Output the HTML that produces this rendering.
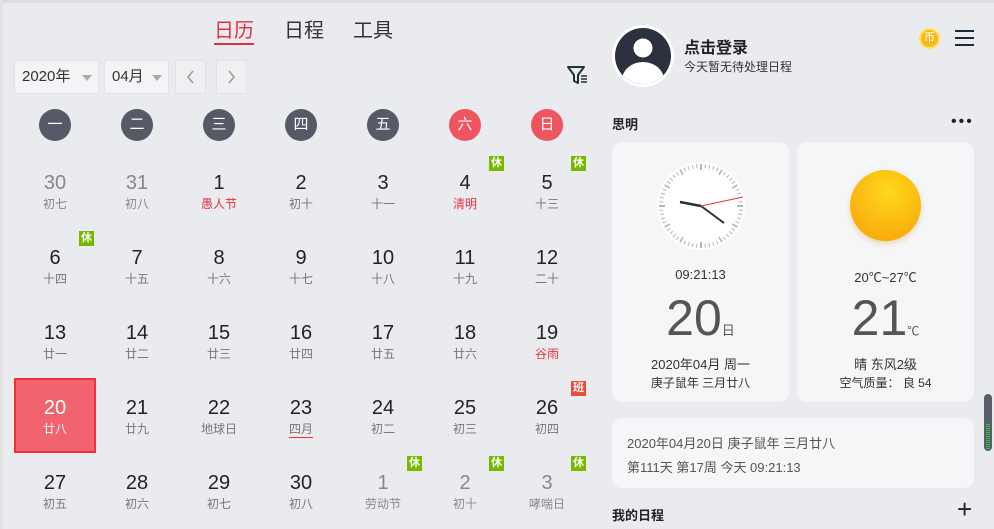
<!DOCTYPE html>
<html><head><meta charset="utf-8">
<style>
*{margin:0;padding:0;box-sizing:border-box}
body{width:994px;height:529px;overflow:hidden;background:#eaebee;font-family:"Liberation Sans","Noto Sans CJK SC",sans-serif;position:relative;color:#222}
.a{position:absolute}
.tab{position:absolute;top:14px;font-size:20px;color:#333}
.sel{position:absolute;top:60px;height:34px;background:#f3f4f6;border:1px solid #e2e3e6;font-size:15px;color:#333;line-height:32px;padding-left:7px}
.sel i{position:absolute;top:14px;width:0;height:0;border-left:5px solid transparent;border-right:5px solid transparent;border-top:6px solid #aaa}
.nb{position:absolute;top:60px;width:31px;height:34px;background:#eef0f2;border:1px solid #e2e3e6}
.wd{position:absolute;top:109px;width:32px;height:32px;border-radius:50%;background:#555a66;color:#fff;text-align:center;line-height:32px;font-size:15px}
.c{position:absolute;width:82px;height:75px;text-align:center}
.c b{display:block;font-weight:normal;font-size:20px;color:#222;margin-top:19px;line-height:22px}
.c s{display:block;text-decoration:none;font-size:12px;color:#777;line-height:16px;margin-top:2px}
.c.g b{color:#888}.c.g s{color:#888}
.r s{color:#e4313f!important}
.bx{position:absolute;top:3px;right:2px;width:15px;height:15px;background:#79b800;color:#fff;font-size:11px;line-height:15px;text-align:center;font-weight:bold}
.bx.ban{background:#e94c3c}
.card{position:absolute;background:#f5f6f8;border-radius:10px}
</style></head><body>
<div class="a" style="left:0;top:0;width:994px;height:3px;background:#dcdcdc"></div>
<div class="a" style="left:0;top:0;width:3px;height:529px;background:#e2e2e2"></div>

<div class="tab" style="left:214px;color:#e4313f">日历</div>
<div class="a" style="left:214px;top:43px;width:40px;height:2px;background:#e4313f"></div>
<div class="tab" style="left:284px">日程</div>
<div class="tab" style="left:353px">工具</div>

<div class="sel" style="left:14px;width:85px">2020年<i style="left:67px"></i></div>
<div class="sel" style="left:104px;width:65px">04月<i style="left:47px"></i></div>
<div class="nb" style="left:175px"><svg width="29" height="32" viewBox="0 0 29 32"><path d="M17 10 L12 16 L17 22" fill="none" stroke="#999" stroke-width="1.5"/></svg></div>
<div class="nb" style="left:216px"><svg width="29" height="32" viewBox="0 0 29 32"><path d="M12 10 L17 16 L12 22" fill="none" stroke="#999" stroke-width="1.5"/></svg></div>
<svg class="a" style="left:566px;top:64px" width="26" height="22" viewBox="0 0 26 22"><path d="M2 3 H18 L12 11 V19 L8 17 V11 Z" fill="none" stroke="#233" stroke-width="2" stroke-linejoin="round"/><path d="M15 12h6M15 15h6M15 18h6" stroke="#233" stroke-width="1.5"/></svg>

<div class="wd" style="left:39px">一</div>
<div class="wd" style="left:121px">二</div>
<div class="wd" style="left:203px">三</div>
<div class="wd" style="left:285px">四</div>
<div class="wd" style="left:367px">五</div>
<div class="wd" style="left:449px;background:#ef5461">六</div>
<div class="wd" style="left:531px;background:#ef5461">日</div>

<div class="c g" style="left:14px;top:153px"><b>30</b><s>初七</s></div>
<div class="c g" style="left:96px;top:153px"><b>31</b><s>初八</s></div>
<div class="c r" style="left:178px;top:153px"><b>1</b><s>愚人节</s></div>
<div class="c" style="left:260px;top:153px"><b>2</b><s>初十</s></div>
<div class="c" style="left:342px;top:153px"><b>3</b><s>十一</s></div>
<div class="c r" style="left:424px;top:153px"><div class="bx">休</div><b>4</b><s>清明</s></div>
<div class="c" style="left:506px;top:153px"><div class="bx">休</div><b>5</b><s>十三</s></div>

<div class="c" style="left:14px;top:228px"><div class="bx">休</div><b>6</b><s>十四</s></div>
<div class="c" style="left:96px;top:228px"><b>7</b><s>十五</s></div>
<div class="c" style="left:178px;top:228px"><b>8</b><s>十六</s></div>
<div class="c" style="left:260px;top:228px"><b>9</b><s>十七</s></div>
<div class="c" style="left:342px;top:228px"><b>10</b><s>十八</s></div>
<div class="c" style="left:424px;top:228px"><b>11</b><s>十九</s></div>
<div class="c" style="left:506px;top:228px"><b>12</b><s>二十</s></div>

<div class="c" style="left:14px;top:303px"><b>13</b><s>廿一</s></div>
<div class="c" style="left:96px;top:303px"><b>14</b><s>廿二</s></div>
<div class="c" style="left:178px;top:303px"><b>15</b><s>廿三</s></div>
<div class="c" style="left:260px;top:303px"><b>16</b><s>廿四</s></div>
<div class="c" style="left:342px;top:303px"><b>17</b><s>廿五</s></div>
<div class="c" style="left:424px;top:303px"><b>18</b><s>廿六</s></div>
<div class="c r" style="left:506px;top:303px"><b>19</b><s>谷雨</s></div>

<div class="c" style="left:14px;top:378px;background:#f0636f;border:2px solid #f0303d"><b style="color:#fff;margin-top:17px">20</b><s style="color:#fff">廿八</s></div>
<div class="c" style="left:96px;top:378px"><b>21</b><s>廿九</s></div>
<div class="c" style="left:178px;top:378px"><b>22</b><s>地球日</s></div>
<div class="c" style="left:260px;top:378px"><b>23</b><s><span style="border-bottom:1px solid #e4313f;padding-bottom:1px">四月</span></s></div>
<div class="c" style="left:342px;top:378px"><b>24</b><s>初二</s></div>
<div class="c" style="left:424px;top:378px"><b>25</b><s>初三</s></div>
<div class="c" style="left:506px;top:378px"><div class="bx ban">班</div><b>26</b><s>初四</s></div>

<div class="c" style="left:14px;top:453px"><b>27</b><s>初五</s></div>
<div class="c" style="left:96px;top:453px"><b>28</b><s>初六</s></div>
<div class="c" style="left:178px;top:453px"><b>29</b><s>初七</s></div>
<div class="c" style="left:260px;top:453px"><b>30</b><s>初八</s></div>
<div class="c g" style="left:342px;top:453px"><div class="bx">休</div><b>1</b><s>劳动节</s></div>
<div class="c g" style="left:424px;top:453px"><div class="bx">休</div><b>2</b><s>初十</s></div>
<div class="c g" style="left:506px;top:453px"><div class="bx">休</div><b>3</b><s>哮喘日</s></div>

<div class="a" style="left:612px;top:25px;width:62px;height:62px;border-radius:50%;background:#fff"></div>
<svg class="a" style="left:615px;top:28px" width="56" height="56" viewBox="0 0 56 56"><defs><clipPath id="cp"><circle cx="28" cy="28" r="28"/></clipPath></defs><circle cx="28" cy="28" r="28" fill="#2c3140"/><g clip-path="url(#cp)"><circle cx="28" cy="20" r="9.5" fill="#fff"/><ellipse cx="28" cy="52" rx="21" ry="18" fill="#fff"/></g></svg>
<div class="a" style="left:684px;top:34px;font-size:16px;font-weight:bold;color:#222">点击登录</div>
<div class="a" style="left:684px;top:58px;font-size:12px;color:#333">今天暂无待处理日程</div>
<div class="a" style="left:919px;top:28px;width:21px;height:21px;border-radius:50%;background:#f5b91c;border:2px solid #ffe060;color:#fff;font-size:11px;text-align:center;line-height:17px">币</div>
<div class="a" style="left:955px;top:30px;width:19px;height:2px;background:#1a2a3a"></div>
<div class="a" style="left:955px;top:37px;width:19px;height:2px;background:#1a2a3a"></div>
<div class="a" style="left:955px;top:44px;width:19px;height:2px;background:#1a2a3a"></div>

<div class="a" style="left:612px;top:114px;font-size:13px;font-weight:bold;color:#222">思明</div>
<div class="a" style="left:951px;top:114px;font-size:16px;letter-spacing:2px;color:#222;line-height:16px">•••</div>

<div class="card" style="left:612px;top:142px;width:177px;height:260px"></div>
<svg class="a" style="left:655px;top:160px" width="92" height="92" viewBox="-46 -46 92 92">
<circle r="44" fill="#fff"/>
<g stroke="#b5b5b5" stroke-width="1">
<line x1="0" y1="-42" x2="0" y2="-36" stroke-width="2"/><line x1="0" y1="42" x2="0" y2="36" stroke-width="2"/><line x1="-42" y1="0" x2="-36" y2="0" stroke-width="2"/><line x1="42" y1="0" x2="36" y2="0" stroke-width="2"/>
<g id="t"><line x1="0" y1="-42" x2="0" y2="-38" transform="rotate(6)"/><line x1="0" y1="-42" x2="0" y2="-38" transform="rotate(12)"/><line x1="0" y1="-42" x2="0" y2="-36" transform="rotate(30)" stroke-width="1.6"/><line x1="0" y1="-42" x2="0" y2="-38" transform="rotate(18)"/><line x1="0" y1="-42" x2="0" y2="-38" transform="rotate(24)"/><line x1="0" y1="-42" x2="0" y2="-38" transform="rotate(36)"/><line x1="0" y1="-42" x2="0" y2="-38" transform="rotate(42)"/><line x1="0" y1="-42" x2="0" y2="-38" transform="rotate(48)"/><line x1="0" y1="-42" x2="0" y2="-38" transform="rotate(54)"/><line x1="0" y1="-42" x2="0" y2="-36" transform="rotate(60)" stroke-width="1.6"/><line x1="0" y1="-42" x2="0" y2="-38" transform="rotate(66)"/><line x1="0" y1="-42" x2="0" y2="-38" transform="rotate(72)"/><line x1="0" y1="-42" x2="0" y2="-38" transform="rotate(78)"/><line x1="0" y1="-42" x2="0" y2="-38" transform="rotate(84)"/></g>
<use href="#t" transform="rotate(90)"/><use href="#t" transform="rotate(180)"/><use href="#t" transform="rotate(270)"/>
</g>
<line x1="0" y1="0" x2="-21" y2="-4" stroke="#2a2f3a" stroke-width="2.5"/>
<line x1="0" y1="0" x2="23" y2="17" stroke="#2a2f3a" stroke-width="2"/>
<line x1="0" y1="0" x2="42" y2="-9" stroke="#e4313f" stroke-width="1"/>
</svg>
<div class="a" style="left:612px;top:267px;width:177px;text-align:center;font-size:13px;color:#333">09:21:13</div>
<div class="a" style="left:612px;top:288px;width:177px;text-align:center;font-size:50px;color:#555;line-height:60px">20<span style="font-size:13px">日</span></div>
<div class="a" style="left:612px;top:354px;width:177px;text-align:center;font-size:13px;color:#333">2020年04月 周一</div>
<div class="a" style="left:612px;top:374px;width:177px;text-align:center;font-size:12px;color:#333">庚子鼠年 三月廿八</div>

<div class="card" style="left:797px;top:142px;width:177px;height:260px"></div>
<div class="a" style="left:850px;top:170px;width:71px;height:71px;border-radius:50%;background:radial-gradient(circle at 55% 30%,#ffd81a,#fbb812 55%,#f5a000);box-shadow:0 3px 6px rgba(200,130,0,.25)"></div>
<div class="a" style="left:797px;top:267px;width:177px;text-align:center;font-size:13px;color:#333">20℃~27℃</div>
<div class="a" style="left:797px;top:288px;width:177px;text-align:center;font-size:50px;color:#555;line-height:60px">21<span style="font-size:12px">℃</span></div>
<div class="a" style="left:797px;top:354px;width:177px;text-align:center;font-size:13px;color:#333">晴 东风2级</div>
<div class="a" style="left:797px;top:374px;width:177px;text-align:center;font-size:12px;color:#333">空气质量： 良 54</div>

<div class="card" style="left:612px;top:418px;width:362px;height:70px"></div>
<div class="a" style="left:627px;top:433px;font-size:13px;color:#555">2020年04月20日 庚子鼠年 三月廿八</div>
<div class="a" style="left:627px;top:457px;font-size:13px;color:#555">第111天 第17周 今天 09:21:13</div>

<div class="a" style="left:984px;top:394px;width:8px;height:57px;border-radius:4px;background:#5a5e66"></div>
<div class="a" style="left:986px;top:424px;width:4px;height:25px;background:repeating-linear-gradient(#2fc24a 0 1px,#5a5e66 1px 2px)"></div>

<div class="a" style="left:612px;top:505px;font-size:13px;font-weight:bold;color:#222">我的日程</div>
<div class="a" style="left:957px;top:496px;font-size:26px;color:#222;line-height:26px;font-weight:300">+</div>
</body></html>
